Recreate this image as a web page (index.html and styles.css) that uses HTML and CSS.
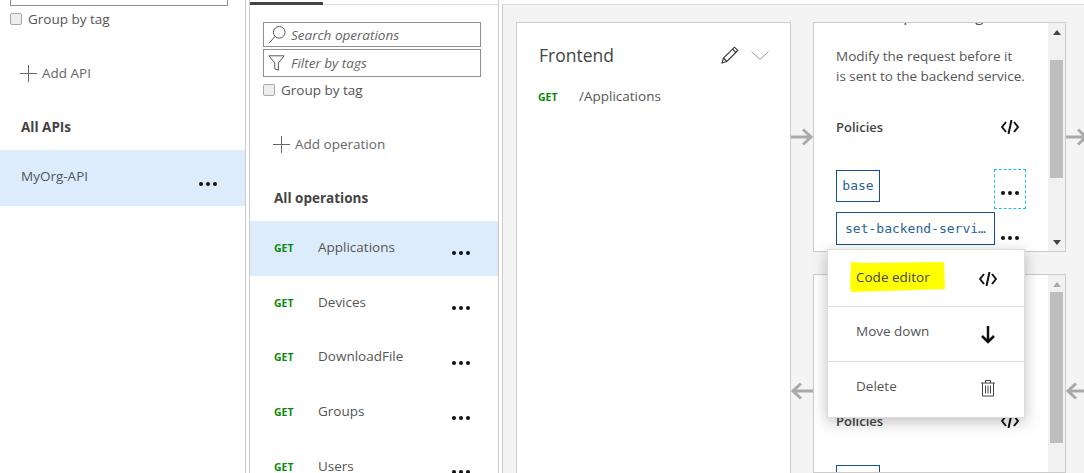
FILE: index.html
```html
<!DOCTYPE html>
<html lang="en">
<head>
<meta charset="utf-8">
<title>API Management</title>
<link rel="stylesheet" href="styles.css">
</head>
<body>
<div class="page">
  <aside class="apis">
    <div class="stub-input"></div>
    <label class="check-row check-row-apis"><input type="checkbox" class="check"><span>Group by tag</span></label>
    <div class="add-row add-api">
      <svg class="plus" viewBox="0 0 17 17"><path d="M0 8.5h17M8.5 0v17"/></svg><span>Add API</span>
    </div>
    <div class="heading heading-apis">All APIs</div>
    <div class="api-row selected"><span>MyOrg-API</span><span class="dots"><i></i><i></i><i></i></span></div>
  </aside>

  <section class="operations">
    <div class="tabs"><div class="tab-active"></div></div>
    <div class="field field-search">
      <svg class="field-icon" viewBox="0 0 20 20"><circle cx="12.5" cy="7" r="6.500"/><path d="M8 11.500L1 19"/></svg>
      <span>Search operations</span>
    </div>
    <div class="field field-filter">
      <svg class="field-icon" viewBox="0 0 20 20"><path d="M1 2h17l-6.500 8v8l-4-1.500V10z"/></svg>
      <span>Filter by tags</span>
    </div>
    <label class="check-row check-row-ops"><input type="checkbox" class="check"><span>Group by tag</span></label>
    <div class="add-row add-op">
      <svg class="plus" viewBox="0 0 17 17"><path d="M0 8.5h17M8.500 0v17"/></svg><span>Add operation</span>
    </div>
    <div class="heading heading-ops">All operations</div>
    <ul class="op-list">
      <li class="op-row selected"><span class="get">GET</span><span class="op-name">Applications</span><span class="dots"><i></i><i></i><i></i></span></li>
      <li class="op-row"><span class="get">GET</span><span class="op-name">Devices</span><span class="dots"><i></i><i></i><i></i></span></li>
      <li class="op-row"><span class="get">GET</span><span class="op-name">DownloadFile</span><span class="dots"><i></i><i></i><i></i></span></li>
      <li class="op-row"><span class="get">GET</span><span class="op-name">Groups</span><span class="dots"><i></i><i></i><i></i></span></li>
      <li class="op-row"><span class="get">GET</span><span class="op-name">Users</span><span class="dots"><i></i><i></i><i></i></span></li>
    </ul>
  </section>

  <main class="design">
    <div class="card frontend">
      <div class="frontend-head">
        <h2>Frontend</h2>
        <svg class="pencil" viewBox="0 0 18 18"><path d="M1 17l1.500-5L13.500 1.200l3.300 3.300L5.800 15.500zM2.500 12l3.300 3.500M11.500 3.200l3.300 3.300"/></svg>
        <svg class="chevron" viewBox="0 0 18 9"><path d="M.5.500L9 8.500 17.500.500"/></svg>
      </div>
      <div class="frontend-op"><span class="get">GET</span><span class="frontend-path">/Applications</span></div>
    </div>

    <div class="flow-col">
      <div class="arrows arrows-top">
        <svg class="arrow" viewBox="0 0 22 18"><path d="M0 9h20M12 1.500L20 9l-8 7.500"/></svg>
      </div>
      <div class="arrows arrows-bottom">
        <svg class="arrow" viewBox="0 0 22 18"><path d="M22 9H2M10 1.500L2 9l8 7.500"/></svg>
      </div>
    </div>

    <div class="pipeline">
      <div class="card inbound">
        <div class="card-body">
          <h3 class="clipped-title">Inbound processing</h3>
          <p class="desc">Modify the request before it<br>is sent to the backend service.</p>
          <div class="policies-head"><span>Policies</span>
            <svg class="code" viewBox="0 0 18 14"><path d="M5 2L1 7l4 5M13 2l4 5-4 5M10.500 0L7.500 14"/></svg>
          </div>
          <div class="policy-row policy-row-base"><span class="policy policy-base">base</span>
            <span class="dots-focus"><span class="dots"><i></i><i></i><i></i></span></span>
          </div>
          <div class="policy-row policy-row-set"><span class="policy policy-set">set-backend-servi…</span>
            <span class="dots dots-set"><i></i><i></i><i></i></span>
          </div>
        </div>
        <div class="scrollbar"><span class="tri tri-up"></span><span class="thumb thumb-in"></span><span class="tri tri-down"></span></div>
      </div>
      <div class="card outbound">
        <div class="card-body outbound-body">
          <div class="policies-head"><span>Policies</span>
            <svg class="code" viewBox="0 0 18 14"><path d="M5 2L1 7l4 5M13 2l4 5-4 5M10.500 0L7.500 14"/></svg>
          </div>
          <span class="policy policy-stub"></span>
        </div>
        <div class="scrollbar"><span class="tri tri-up tri-faded"></span><span class="thumb thumb-out"></span></div>
      </div>
    </div>

    <div class="flow-col flow-col-end">
      <div class="arrows arrows-top">
        <svg class="arrow" viewBox="0 0 22 18"><path d="M0 9h20M12 1.500L20 9l-8 7.500"/></svg>
      </div>
      <div class="arrows arrows-bottom">
        <svg class="arrow" viewBox="0 0 22 18"><path d="M22 9H2M10 1.500L2 9l8 7.500"/></svg>
      </div>
    </div>
  </main>

  <div class="menu">
    <svg class="marker" viewBox="0 0 98 33"><path d="M2 2l12 1 81-1 1 27-60 2-33 1-2-3z"/></svg>
    <div class="menu-item menu-code"><span>Code editor</span>
      <svg class="code" viewBox="0 0 18 14"><path d="M5 2L1 7l4 5M13 2l4 5-4 5M10.500 0L7.500 14"/></svg>
    </div>
    <div class="menu-item"><span>Move down</span>
      <svg class="down" viewBox="0 0 18 18"><path d="M9 0v16M3 10l6 6 6-6"/></svg>
    </div>
    <div class="menu-item"><span>Delete</span>
      <svg class="trash" viewBox="0 0 16 18"><path d="M1 4h14M5.500 4V1.500h5V4M2.500 4v13h11V4M5.500 6.500v8M8 6.500v8M10.500 6.500v8"/></svg>
    </div>
  </div>
</div>
</body>
</html>
```

FILE: styles.css
```css
* { box-sizing: border-box; }
html, body { margin: 0; padding: 0; }
body {
  width: 1084px;
  height: 473px;
  overflow: hidden;
  background: #fff;
  font-family: "Open Sans", "Noto Sans", sans-serif;
  font-size: 13.5px;
  color: #555;
}
.page {
  position: relative;
  display: flex;
  width: 1084px;
  height: 473px;
  overflow: hidden;
}

/* shared */
.check {
  appearance: none;
  width: 12px;
  height: 12px;
  margin: 0;
  border: 1px solid #a9a9a9;
  border-radius: 2px;
  background: #eee;
}
.check-row { display: flex; align-items: center; gap: 6px; height: 18px; color: #555; }
.add-row { display: flex; align-items: center; gap: 5px; height: 20px; color: #666; }
.plus { width: 17px; height: 17px; fill: none; stroke: #666; stroke-width: 1; }
.heading { font-weight: 700; color: #444; font-size: 13.5px; height: 18px; line-height: 18px; }
.selected { background: #dcecfc; }
.dots { display: flex; gap: 3px; width: 18px; flex: none; }
.dots i { width: 4px; height: 4px; border-radius: 50%; background: #111; display: block; }
.get { color: #0a8a0a; font-weight: 700; font-size: 10.5px; }

/* API column */
.apis { width: 246px; flex: none; border-right: 1px solid #ccc; }
.stub-input { height: 6px; margin: 0 17px 0 10px; border: 1px solid #8f8f8f; border-top: 0; }
.check-row-apis { margin: 4px 0 0 10px; }
.add-api { margin: 35px 0 0 20px; }
.heading-apis { margin: 35px 0 0 21px; }
.api-row {
  display: flex;
  align-items: center;
  justify-content: space-between;
  height: 56px;
  margin-top: 14px;
  padding: 0 28px 0 21px;
}
.api-row .dots { margin-top: 12px; }
.api-row > span:first-child { margin-top: -5px; }

/* operations column */
.operations {
  width: 250px;
  flex: none;
  margin-left: 3px;
  border-left: 1px solid #ccc;
  border-right: 1px solid #ccc;
}
.tabs { height: 5px; padding-top: 2px; border-bottom: 1px solid #ddd; }
.tab-active { width: 73px; height: 3px; background: #444; }
.field {
  display: flex;
  align-items: center;
  gap: 5px;
  margin: 0 17px 0 13px;
  padding-left: 4px;
  border: 1px solid #8f8f8f;
  color: #666;
  font-style: italic;
}
.field-search { height: 25px; margin-top: 17px; }
.field-filter { height: 28px; margin-top: 2px; }
.field-icon { width: 18px; height: 18px; flex: none; fill: none; stroke: #555; stroke-width: 1.100; }
.check-row-ops { margin: 4px 0 0 13px; }
.add-op { margin: 35px 0 0 23px; }
.heading-ops { margin: 35px 0 0 24px; }
.op-list { list-style: none; margin: 14px 0 0; padding: 0; }
.op-row { display: flex; align-items: center; height: 54.750px; padding-left: 24px; }
.op-row .get { width: 44px; margin-top: -1px; }
.op-name { flex: 1; margin-top: -3px; }
.op-row .dots { margin: 10px 28px 0 0; }

/* design surface */
.design {
  display: flex;
  flex: 1;
  margin-left: 3px;
  padding: 17px 0 0 13px;
  background: #f4f4f4;
  border-top: 1px solid #ddd;
  border-left: 1px solid #ccc;
  margin-top: 4px;
  overflow: hidden;
}
.card { background: #fff; border: 1px solid #ccc; }
.frontend { width: 275px; height: 480px; flex: none; padding: 19px 22px 19px 21px; }
.frontend-head { display: flex; align-items: center; height: 26px; }
.frontend-head h2 { flex: 1; margin: 0 0 0 1px; font-size: 17.500px; font-weight: 400; color: #444; }
.pencil { width: 18px; height: 18px; fill: none; stroke: #333; stroke-width: 1.100; margin-right: 12px; }
.chevron { width: 18px; height: 9px; fill: none; stroke: #999; margin-right: -1px; }
.frontend-op { display: flex; align-items: center; margin-top: 21px; }
.frontend-op .get { width: 41px; }
.frontend-path { color: #555; margin-top: -2px; }

.flow-col { display: flex; flex-direction: column; width: 22px; flex: none; }
.flow-col-end { width: 19px; }
.arrows { display: flex; align-items: center; height: 18px; }
.arrows-top { margin-top: 106px; }
.arrows-bottom { margin-top: 236px; }
.arrow { width: 22px; height: 18px; flex: none; fill: none; stroke: #aaa; stroke-width: 3; }

.pipeline { display: flex; flex-direction: column; gap: 22px; width: 253px; flex: none; }
.inbound { display: flex; height: 232px; overflow: hidden; }
.outbound { display: flex; height: 200px; overflow: hidden; }
.card-body { flex: 1; min-width: 0; padding: 0 22px; overflow: hidden; }
.clipped-title { margin: -19px 0 0; font-size: 16px; line-height: 22px; height: 22px; font-weight: 400; white-space: nowrap; }
.desc { margin: 20px 0 0; line-height: 20px; color: #555; }
.policies-head {
  display: flex;
  align-items: center;
  justify-content: space-between;
  margin: 31px 7px 0 0;
  height: 20px;
  color: #444;
}
.policies-head span { font-weight: 600; font-size: 13px; }
.code { width: 18px; height: 14px; fill: none; stroke: #111; stroke-width: 2; flex: none; }
.policy {
  display: block;
  border: 1px solid #14508c;
  font-family: "DejaVu Sans Mono", "Liberation Mono", monospace;
  font-size: 13px;
  color: #2c6496;
}
.policy-row { display: flex; justify-content: space-between; }
.policy-row-base { margin-top: 32px; height: 40px; }
.policy-row-set { height: 33px; margin-top: 3px; }
.policy-base { width: 44px; height: 32px; margin-top: 1px; line-height: 30px; text-align: center; }
.policy-set { width: 159px; height: 33px; line-height: 31px; padding-left: 8px; white-space: nowrap; }
.dots-focus {
  display: flex;
  justify-content: center;
  width: 32px;
  height: 40px;
  padding-top: 21px;
  border: 1px dashed #1ac0ee;
}
.dots-set { margin: 24px 7px 0 0; }

.scrollbar {
  display: flex;
  flex-direction: column;
  align-items: center;
  width: 17px;
  flex: none;
  background: #f1f1f1;
}
.tri { width: 0; height: 0; border-left: 4px solid transparent; border-right: 4px solid transparent; flex: none; }
.tri-up { border-bottom: 5px solid #444; margin-top: 7px; }
.tri-down { border-top: 5px solid #444; margin-top: auto; margin-bottom: 6px; }
.tri-faded { border-bottom-color: #a8a8a8; }
.thumb { width: 13px; background: #bdbdbd; flex: none; }
.thumb-in { height: 118px; margin-top: 25px; }
.thumb-out { height: 151px; margin-top: 5px; }
.outbound-body .policies-head { margin-top: 136px; }
.policy-stub { width: 44px; height: 32px; margin-top: 34px; }

/* context menu */
.menu {
  position: absolute;
  left: 827px;
  top: 249px;
  width: 198px;
  height: 169px;
  background: #fff;
  border: 1px solid #ddd;
  box-shadow: 0 4px 14px rgba(0, 0, 0, .25);
}
.marker { position: absolute; left: 21px; top: 10px; width: 98px; height: 33px; fill: #ff0; }
.menu-item {
  position: relative;
  display: flex;
  align-items: center;
  justify-content: space-between;
  height: 55px;
  padding: 0 27px 0 28px;
  border-bottom: 1px solid #ddd;
  color: #555;
}
.menu-code { height: 57px; color: #444; }
.menu-item:last-child { border-bottom: 0; }
.menu-item > span { margin-top: -7px; }
.menu-code > span { margin-top: -3px; }
.menu-item .code { margin-top: 1px; }
.down { width: 18px; height: 18px; fill: none; stroke: #111; stroke-width: 2.500; margin-top: 2px; }
.trash { width: 16px; height: 18px; fill: none; stroke: #444; stroke-width: 1; margin: -4px 1px 0 0; }
```
